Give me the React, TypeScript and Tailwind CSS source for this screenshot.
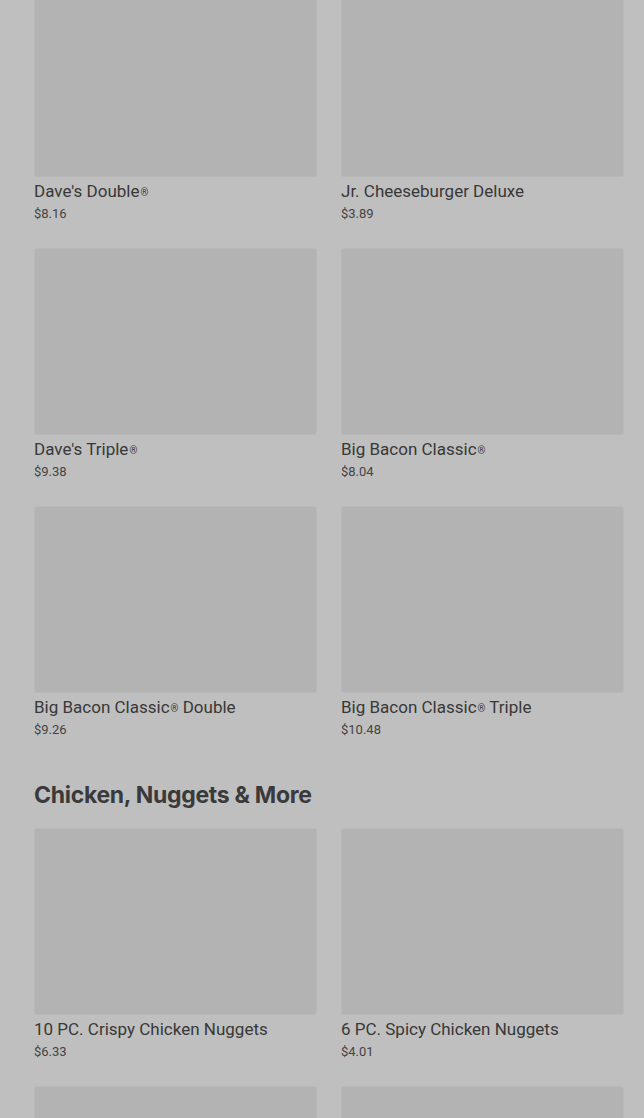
import React from "react";

type Item = { name: string; price: string };

const burgers: Item[] = [
  { name: "Dave's Double®", price: "$8.16" },
  { name: "Jr. Cheeseburger Deluxe", price: "$3.89" },
  { name: "Dave's Triple®", price: "$9.38" },
  { name: "Big Bacon Classic®", price: "$8.04" },
  { name: "Big Bacon Classic® Double", price: "$9.26" },
  { name: "Big Bacon Classic® Triple", price: "$10.48" },
];

const chicken: Item[] = [
  { name: "10 PC. Crispy Chicken Nuggets", price: "$6.33" },
  { name: "6 PC. Spicy Chicken Nuggets", price: "$4.01" },
  { name: "", price: "" },
  { name: "", price: "" },
];

function renderName(name: string) {
  const parts = name.split("®");
  return parts.map((p, i) => (
    <React.Fragment key={i}>
      {p}
      {i < parts.length - 1 && <sup className="text-[10px] relative top-[-1px] ml-[1px]">®</sup>}
    </React.Fragment>
  ));
}

function Card({ item }: { item: Item }) {
  return (
    <div className="flex flex-col">
      <div className="h-[187px] rounded-[3px] bg-[#b3b3b3] border border-[#b8b8b8]" />
      {item.name && (
        <>
          <div
            className="mt-[4px] text-[17px] leading-[20px] text-[#383838] whitespace-nowrap"
            style={{ fontFamily: "Roboto, 'Liberation Sans', sans-serif" }}
          >
            {renderName(item.name)}
          </div>
          <div
            className="mt-[4px] text-[13px] leading-[18px] text-[#444444]"
            style={{ fontFamily: "Roboto, 'Liberation Sans', sans-serif" }}
          >
            {item.price}
          </div>
        </>
      )}
    </div>
  );
}

export default function App() {
  return (
    <div className="min-h-[1118px] h-[1118px] overflow-hidden bg-[#bfbfbf]">
      <div className="mt-[-10px] pl-[34px] pr-[20px] flex flex-col">
        <div className="grid grid-cols-2 gap-x-[24px] gap-y-[25px]">
          {burgers.map((b, i) => (
            <Card key={i} item={b} />
          ))}
        </div>
        <h2
          className="mt-[42px] mb-[19px] text-[23px] leading-[28px] font-bold text-[#3a3a3a] tracking-[-0.3px]"
          style={{ fontFamily: "Inter, 'Liberation Sans', sans-serif" }}
        >
          Chicken, Nuggets &amp; More
        </h2>
        <div className="grid grid-cols-2 gap-x-[24px] gap-y-[25px]">
          {chicken.map((b, i) => (
            <Card key={i} item={b} />
          ))}
        </div>
      </div>
    </div>
  );
}
